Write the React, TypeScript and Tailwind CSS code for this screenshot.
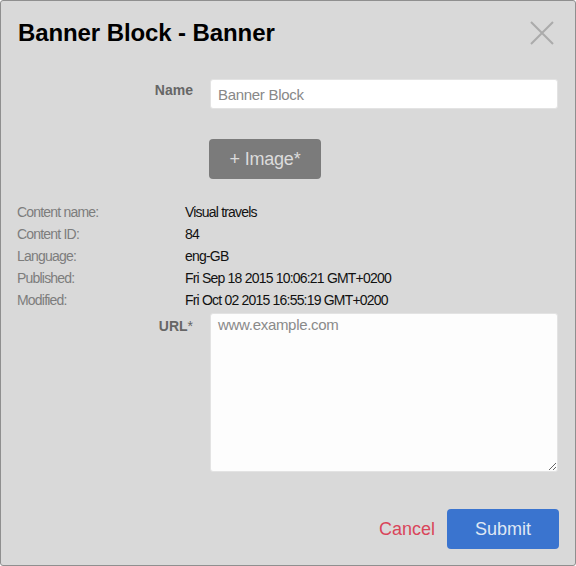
const info = [
  ['Content name:', 'Visual travels'],
  ['Content ID:', '84'],
  ['Language:', 'eng-GB'],
  ['Published:', 'Fri Sep 18 2015 10:06:21 GMT+0200'],
  ['Modified:', 'Fri Oct 02 2015 16:55:19 GMT+0200'],
];

export default function App() {
  return (
    <div
      className="w-[576px] h-[566px] bg-[#d9d9d9] border border-[#8f8f8f] rounded-[3px] flex flex-col text-[#111]"
      style={{ fontFamily: '"Liberation Sans", Arial, sans-serif' }}
    >
      {/* Header */}
      <div className="flex items-start justify-between pl-[17px] pr-[20px] pt-[18px]">
        <h1 className="text-[24px] font-bold leading-[28px] text-black tracking-[-0.1px]">Banner Block - Banner</h1>
        <svg width="26" height="26" viewBox="0 0 26 26" className="mt-[1px]">
          <path d="M2 2 L24 24 M24 2 L2 24" stroke="#ababab" strokeWidth="2" />
        </svg>
      </div>

      {/* Name */}
      <div className="flex items-start mt-[32px] pr-[17px]">
        <label className="w-[192px] text-right text-[14px] font-bold text-[#666] pt-[2px] leading-[18px]">
          Name
        </label>
        <input
          className="ml-[17px] flex-1 h-[30px] bg-white rounded-[3px] border border-[#e3e3e3] px-[7px] text-[15px] tracking-[-0.3px] text-[#888] outline-none"
          defaultValue="Banner Block"
        />
      </div>

      {/* Image button */}
      <div className="pl-[208px] mt-[30px]">
        <button className="w-[112px] h-[40px] rounded-[4px] bg-[#7b7b7b] text-[#dcdcdc] text-[18px] tracking-[-0.2px]">
          + Image*
        </button>
      </div>

      {/* Info */}
      <div className="mt-[22px] pl-[16px] flex flex-col">
        {info.map(([k, v]) => (
          <div key={k} className="flex text-[14px] leading-[22px] tracking-[-0.8px]">
            <span className="w-[168px] text-[#7d7d7d]">{k}</span>
            <span className="text-[#111]">{v}</span>
          </div>
        ))}
      </div>

      {/* URL */}
      <div className="flex items-start pr-[17px] mt-[2px]">
        <label className="w-[192px] text-right text-[14px] font-bold text-[#666] pt-[4px] leading-[18px]">
          URL<span className="font-normal">*</span>
        </label>
        <textarea
          className="ml-[17px] flex-1 h-[159px] bg-[#fdfdfd] rounded-[3px] border border-[#e3e3e3] px-[7px] pt-0 text-[15px] tracking-[-0.3px] text-[#888] placeholder-[#8a8a8a] outline-none"
          placeholder="www.example.com"
        />
      </div>

      {/* Footer */}
      <div className="flex items-center justify-end gap-[12px] pr-[16px] mt-[37px]">
        <button className="text-[18px] text-[#d9455a]">Cancel</button>
        <button className="w-[112px] h-[40px] rounded-[4px] bg-[#3a74cf] text-[18px] text-[#dfe7f4]">
          Submit
        </button>
      </div>
    </div>
  );
}
